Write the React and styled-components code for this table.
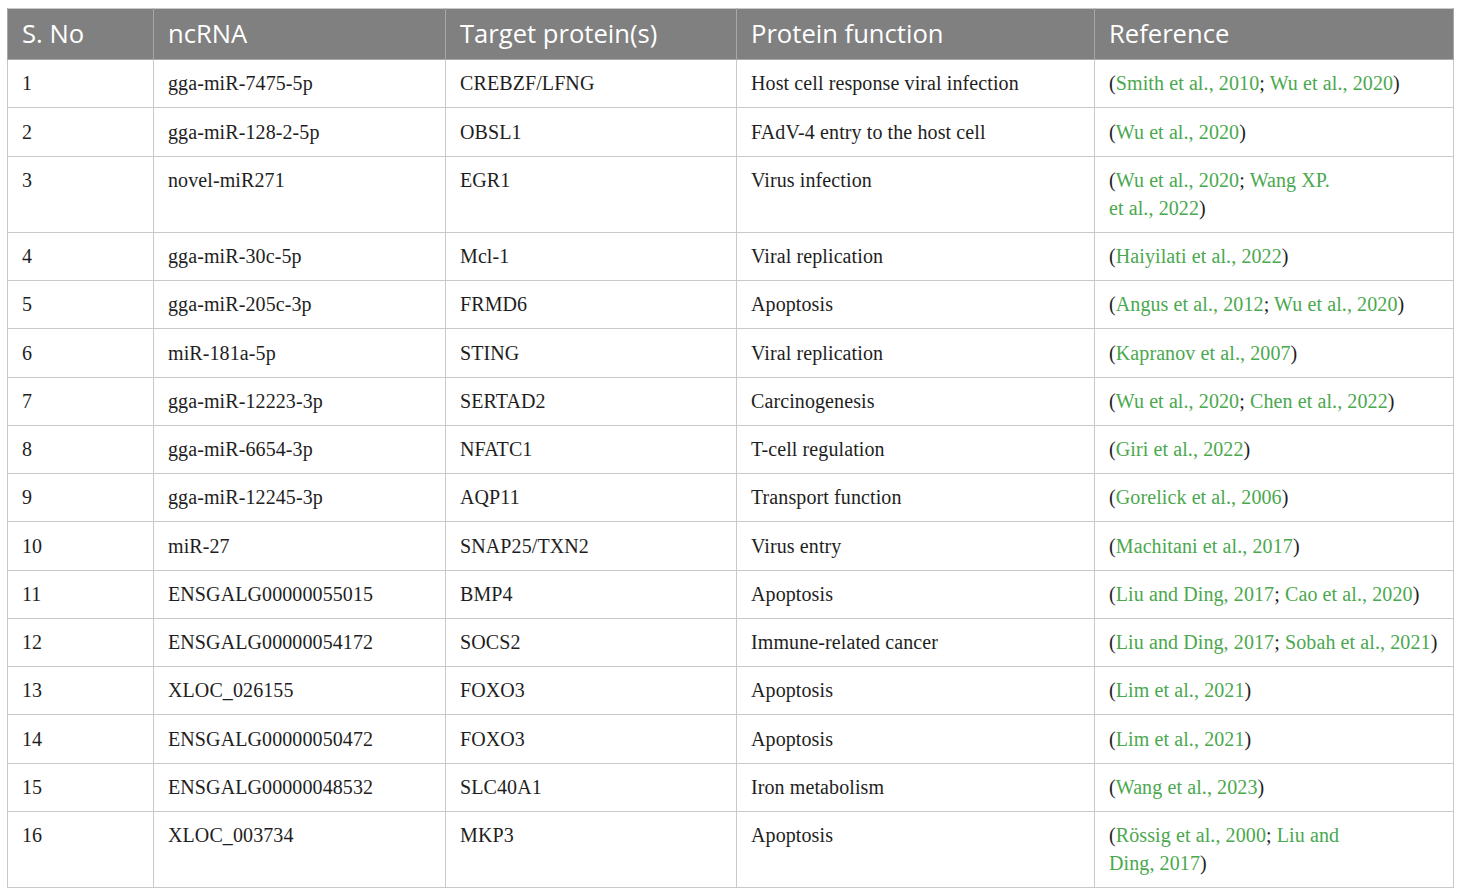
import styled, { createGlobalStyle } from 'styled-components';

const GlobalStyle = createGlobalStyle`
  body {
    margin: 0;
    background: #fff;
  }
`;

const Page = styled.div`
  padding: 8px 8px 8px 7px;
`;

const Table = styled.table`
  width: 1446px;
  border-collapse: collapse;
  table-layout: fixed;
  border: 1px solid #c9c9c9;
`;

const HeadCell = styled.th`
  background: #808080;
  color: #fff;
  font-family: "Open Sans", "Noto Sans", sans-serif;
  font-weight: 400;
  font-size: 25.6px;
  text-align: left;
  height: 51px;
  padding: 0 14px 1px;
  border: 1px solid #a8a8a8;
  border-top: none;
  box-sizing: border-box;
  vertical-align: middle;
`;

const Cell = styled.td`
  font-family: "Liberation Serif", "Times New Roman", serif;
  font-size: 20px;
  letter-spacing: 0.1px;
  line-height: 28px;
  color: #1e1e1e;
  padding: 9.25px 14px 10px;
  border: 1px solid #c9c9c9;
  vertical-align: top;
`;

const Cite = styled.span`
  color: #4aa84e;
`;

const Paren = styled.span`
  color: #1e1e1e;
`;

const cols = [146, 292, 291, 358, 359];
const heads = ['S. No', 'ncRNA', 'Target protein(s)', 'Protein function', 'Reference'];

const rows = [
  ['gga-miR-7475-5p', 'CREBZF/LFNG', 'Host cell response viral infection', [['Smith et al., 2010', 'Wu et al., 2020']]],
  ['gga-miR-128-2-5p', 'OBSL1', 'FAdV-4 entry to the host cell', [['Wu et al., 2020']]],
  ['novel-miR271', 'EGR1', 'Virus infection', [['Wu et al., 2020', 'Wang XP.'], ['et al., 2022']]],
  ['gga-miR-30c-5p', 'Mcl-1', 'Viral replication', [['Haiyilati et al., 2022']]],
  ['gga-miR-205c-3p', 'FRMD6', 'Apoptosis', [['Angus et al., 2012', 'Wu et al., 2020']]],
  ['miR-181a-5p', 'STING', 'Viral replication', [['Kapranov et al., 2007']]],
  ['gga-miR-12223-3p', 'SERTAD2', 'Carcinogenesis', [['Wu et al., 2020', 'Chen et al., 2022']]],
  ['gga-miR-6654-3p', 'NFATC1', 'T-cell regulation', [['Giri et al., 2022']]],
  ['gga-miR-12245-3p', 'AQP11', 'Transport function', [['Gorelick et al., 2006']]],
  ['miR-27', 'SNAP25/TXN2', 'Virus entry', [['Machitani et al., 2017']]],
  ['ENSGALG00000055015', 'BMP4', 'Apoptosis', [['Liu and Ding, 2017', 'Cao et al., 2020']]],
  ['ENSGALG00000054172', 'SOCS2', 'Immune-related cancer', [['Liu and Ding, 2017', 'Sobah et al., 2021']]],
  ['XLOC_026155', 'FOXO3', 'Apoptosis', [['Lim et al., 2021']]],
  ['ENSGALG00000050472', 'FOXO3', 'Apoptosis', [['Lim et al., 2021']]],
  ['ENSGALG00000048532', 'SLC40A1', 'Iron metabolism', [['Wang et al., 2023']]],
  ['XLOC_003734', 'MKP3', 'Apoptosis', [['Rössig et al., 2000', 'Liu and'], ['Ding, 2017']]],
];

// refs: list of lines, each line a list of citations joined by "; "
function References({ lines }) {
  return (
    <>
      <Paren>(</Paren>
      {lines.map((line, li) => (
        <span key={li}>
          {li > 0 && <br />}
          {line.map((c, ci) => (
            <span key={ci}>
              {ci > 0 && <Paren>; </Paren>}
              <Cite>{c}</Cite>
            </span>
          ))}
        </span>
      ))}
      <Paren>)</Paren>
    </>
  );
}

export default function App() {
  return (
    <Page>
      <GlobalStyle />
      <Table>
        <colgroup>
          {cols.map((w, i) => <col key={i} style={{ width: w }} />)}
        </colgroup>
        <thead>
          <tr>
            {heads.map((h) => <HeadCell key={h}>{h}</HeadCell>)}
          </tr>
        </thead>
        <tbody>
          {rows.map((r, i) => (
            <tr key={i}>
              <Cell>{i + 1}</Cell>
              <Cell>{r[0]}</Cell>
              <Cell>{r[1]}</Cell>
              <Cell>{r[2]}</Cell>
              <Cell><References lines={r[3]} /></Cell>
            </tr>
          ))}
        </tbody>
      </Table>
    </Page>
  );
}
